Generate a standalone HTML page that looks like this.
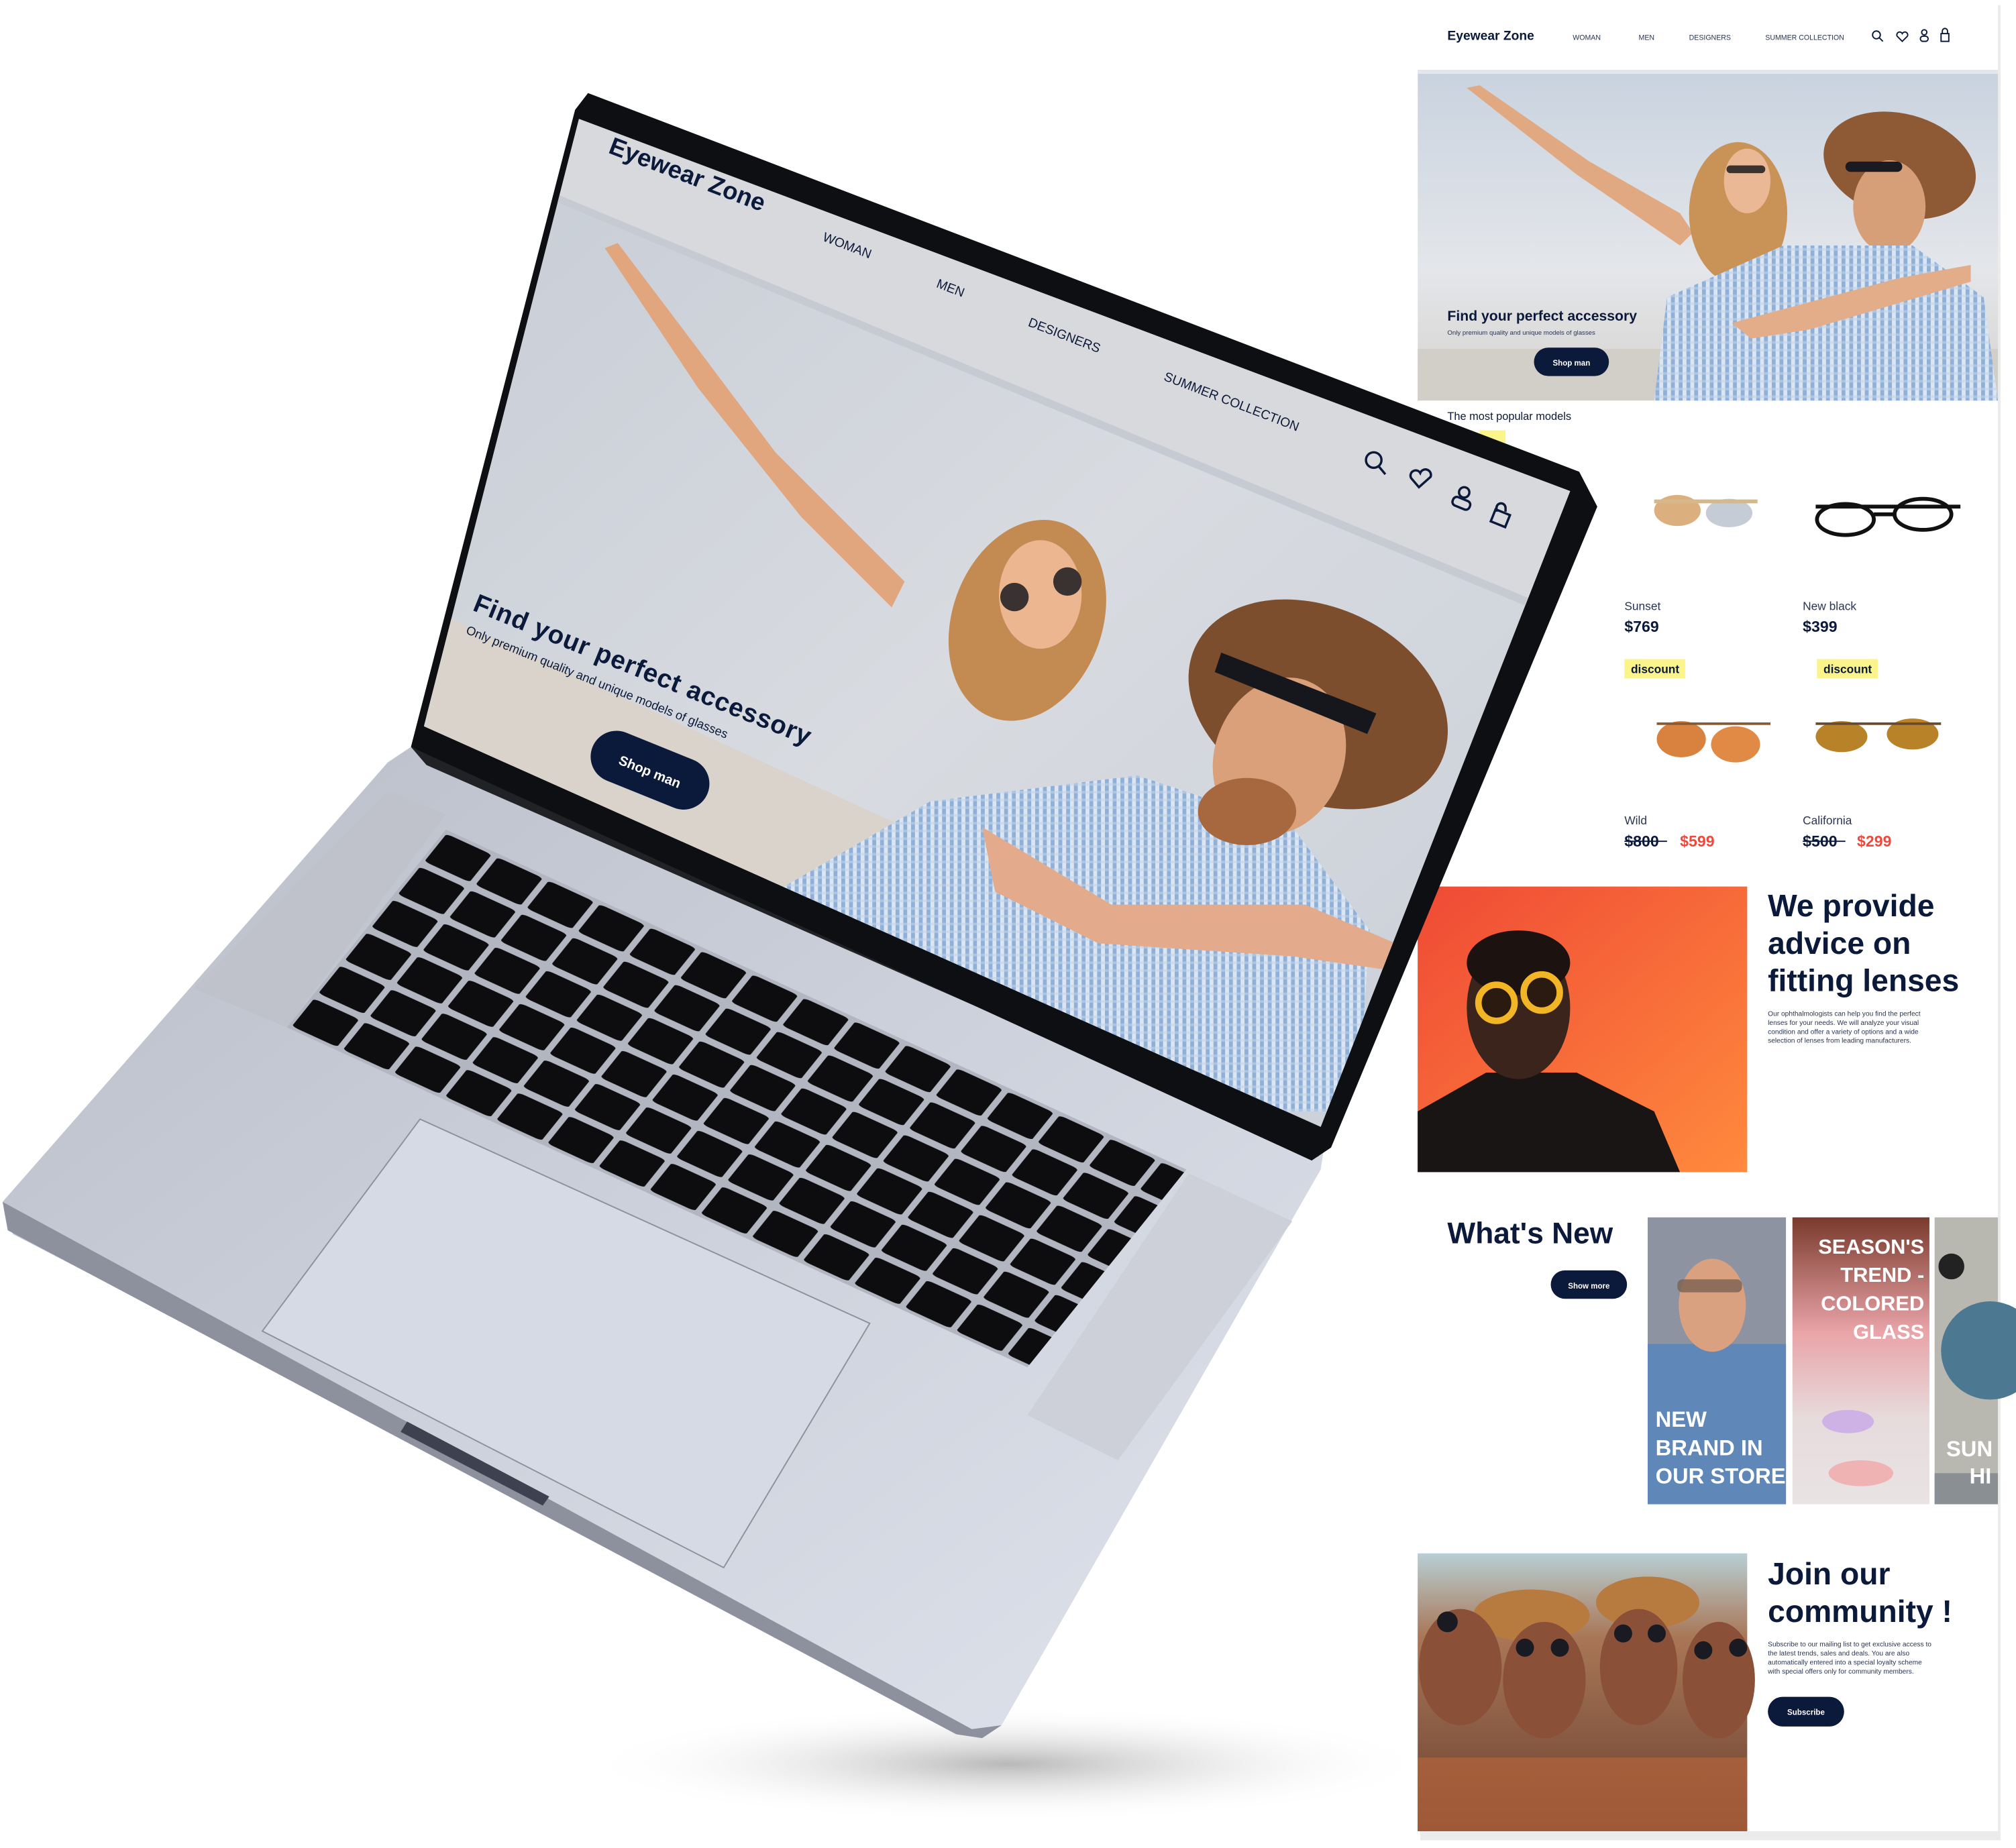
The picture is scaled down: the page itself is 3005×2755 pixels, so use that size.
<!DOCTYPE html>
<html><head><meta charset="utf-8"><style>
html,body{margin:0;padding:0;background:#fff;}
svg{display:block;}
text{font-family:"Liberation Sans",sans-serif;}
</style></head><body>
<svg width="3005" height="2755" viewBox="0 0 1560 1430" preserveAspectRatio="none" xmlns="http://www.w3.org/2000/svg">
<defs>
<linearGradient id="sky" x1="0" y1="0" x2="0" y2="1"><stop offset="0" stop-color="#c9d3df"/><stop offset="0.6" stop-color="#e4e6ea"/><stop offset="1" stop-color="#d6d3cf"/></linearGradient>
<linearGradient id="orange" x1="0" y1="0" x2="1" y2="1"><stop offset="0" stop-color="#ef4a35"/><stop offset="1" stop-color="#ff8a3d"/></linearGradient>
<linearGradient id="silver" x1="0" y1="0" x2="1" y2="1"><stop offset="0" stop-color="#b9bdc7"/><stop offset="0.5" stop-color="#cdd1db"/><stop offset="1" stop-color="#dfe3ec"/></linearGradient>
<linearGradient id="scr" x1="0" y1="0" x2="1" y2="1"><stop offset="0" stop-color="#c5cbd5"/><stop offset="0.5" stop-color="#d8dbe0"/><stop offset="1" stop-color="#c8ced8"/></linearGradient>
<radialGradient id="shadow"><stop offset="0" stop-color="#9a9a9a" stop-opacity="0.7"/><stop offset="1" stop-color="#fff" stop-opacity="0"/></radialGradient>
<linearGradient id="pink" x1="0" y1="0" x2="0" y2="1"><stop offset="0" stop-color="#7a3a2c"/><stop offset="0.4" stop-color="#e9a4a8"/><stop offset="0.7" stop-color="#e7dbdc"/><stop offset="1" stop-color="#e9e3e4"/></linearGradient>
<linearGradient id="comm" x1="0" y1="0" x2="0" y2="1"><stop offset="0" stop-color="#b8cfd4"/><stop offset="0.3" stop-color="#a97757"/><stop offset="1" stop-color="#6a4030"/></linearGradient>
<pattern id="keys" patternUnits="userSpaceOnUse" width="0.069" height="0.1667"><rect x="0.004" y="0.014" width="0.061" height="0.14" rx="0.008" fill="#0d0d0f"/></pattern>
<pattern id="check" patternUnits="userSpaceOnUse" width="6" height="6"><rect width="6" height="6" fill="#8fb0d8"/><rect width="3" height="6" fill="#dbe6f2"/><rect width="6" height="2" fill="#c3d4ea" opacity="0.6"/></pattern>
<clipPath id="dispclip"><polygon points="448,92 1215,380 1022,872 328,562"/></clipPath>
<clipPath id="herocl"><rect x="1097" y="57" width="449" height="253"/></clipPath>
</defs>

<ellipse cx="780" cy="1365" rx="330" ry="45" fill="url(#shadow)"/>

<!-- RIGHT PANEL -->
<rect x="1099" y="4" width="449" height="1420" fill="#d8d8d8" opacity="0.5"/>
<rect x="1097" y="0" width="449" height="1417" fill="#fff"/>
<text x="1120" y="31" font-size="10" font-weight="bold" fill="#0b1a3a">Eyewear Zone</text>
<text x="1217" y="31" font-size="5.5" fill="#2a3550">WOMAN</text>
<text x="1268" y="31" font-size="5.5" fill="#2a3550">MEN</text>
<text x="1307" y="31" font-size="5.5" fill="#2a3550">DESIGNERS</text>
<text x="1366" y="31" font-size="5.5" fill="#2a3550">SUMMER COLLECTION</text>
<g fill="none" stroke="#0b1a3a" stroke-width="1">
<circle cx="1452" cy="27" r="3"/><line x1="1454" y1="29" x2="1457" y2="32"/>
<path d="M1472 32 l-4 -4 a2 2 0 0 1 4 -2 a2 2 0 0 1 4 2 z"/>
<circle cx="1489" cy="25" r="2"/><rect x="1486" y="28" width="6" height="4" rx="2"/>
<rect x="1502" y="26" width="6" height="6"/><path d="M1503 26 v-2 a2 2 0 0 1 4 0 v2"/>
</g>
<rect x="1097" y="54" width="449" height="3" fill="#e3e6ec"/>
<g clip-path="url(#herocl)">
<rect x="1097" y="57" width="449" height="253" fill="url(#sky)"/>
<rect x="1097" y="270" width="449" height="40" fill="#d2cec8"/>
<path d="M1135 68 L1145 66 L1230 125 L1300 165 L1310 180 L1300 190 L1220 135 Z" fill="#e0a982"/>
<ellipse cx="1345" cy="165" rx="38" ry="55" fill="#c99358"/>
<ellipse cx="1352" cy="140" rx="18" ry="25" fill="#eab894"/>
<rect x="1336" y="128" width="30" height="6" rx="3" fill="#3a3330"/>
<ellipse cx="1470" cy="128" rx="60" ry="40" fill="#8e5a35" transform="rotate(15 1470 128)"/>
<ellipse cx="1462" cy="160" rx="28" ry="36" fill="#d79f78"/>
<rect x="1428" y="125" width="44" height="8" rx="4" fill="#1a1b22"/>
<path d="M1290 230 L1380 190 L1480 190 L1535 230 L1546 310 L1280 310 Z" fill="url(#check)"/>
<path d="M1340 250 L1470 215 L1525 205 L1525 218 L1400 255 L1355 262 Z" fill="#e4ad8a"/>
</g>
<text x="1120" y="248" font-size="11" font-weight="bold" fill="#0b1a3a">Find your perfect accessory</text>
<text x="1120" y="259" font-size="5" fill="#2a3550">Only premium quality and unique models of glasses</text>
<rect x="1187" y="269" width="58" height="22" rx="11" fill="#0b1a3a"/>
<text x="1216" y="283" font-size="6" fill="#fff" text-anchor="middle" font-weight="bold">Shop man</text>
<text x="1120" y="325" font-size="8.5" fill="#0b1a3a">The most popular models</text>
<rect x="1145" y="333" width="20" height="10" fill="#fbf48a"/>

<g>
<ellipse cx="1298" cy="395" rx="18" ry="12" fill="#d8a770" opacity="0.9"/><ellipse cx="1338" cy="397" rx="18" ry="11" fill="#c0c7d2" opacity="0.9"/><path d="M1280 388 h80" stroke="#d6b98a" stroke-width="3"/>
<g fill="none" stroke="#111" stroke-width="3"><ellipse cx="1428" cy="402" rx="22" ry="12"/><ellipse cx="1488" cy="398" rx="22" ry="12"/><path d="M1405 392 h112 M1450 398 h16"/></g>
<text x="1257" y="472" font-size="9" fill="#2a3550">Sunset</text>
<text x="1257" y="489" font-size="12" font-weight="bold" fill="#0b1a3a">$769</text>
<text x="1395" y="472" font-size="9" fill="#2a3550">New black</text>
<text x="1395" y="489" font-size="12" font-weight="bold" fill="#0b1a3a">$399</text>
<rect x="1257" y="510" width="47" height="15" fill="#fbf48a"/><text x="1262" y="521" font-size="9" font-weight="bold" fill="#0b1a3a">discount</text>
<rect x="1406" y="510" width="47" height="15" fill="#fbf48a"/><text x="1411" y="521" font-size="9" font-weight="bold" fill="#0b1a3a">discount</text>
<ellipse cx="1301" cy="572" rx="19" ry="14" fill="#d9813e"/><ellipse cx="1343" cy="576" rx="19" ry="14" fill="#e08a45"/><path d="M1282 560 h88" stroke="#8a5a30" stroke-width="2"/>
<ellipse cx="1425" cy="570" rx="20" ry="12" fill="#b88328"/><ellipse cx="1480" cy="568" rx="20" ry="12" fill="#b88328"/><path d="M1405 560 h97" stroke="#6a4a30" stroke-width="2"/>
<text x="1257" y="638" font-size="9" fill="#2a3550">Wild</text>
<text x="1257" y="655" font-size="12" font-weight="bold" fill="#0b1a3a">$800</text><line x1="1257" y1="651" x2="1290" y2="651" stroke="#0b1a3a" stroke-width="1"/>
<text x="1300" y="655" font-size="12" font-weight="bold" fill="#f0483a">$599</text>
<text x="1395" y="638" font-size="9" fill="#2a3550">California</text>
<text x="1395" y="655" font-size="12" font-weight="bold" fill="#0b1a3a">$500</text><line x1="1395" y1="651" x2="1428" y2="651" stroke="#0b1a3a" stroke-width="1"/>
<text x="1437" y="655" font-size="12" font-weight="bold" fill="#f0483a">$299</text>
</g>

<rect x="1097" y="686" width="255" height="221" fill="url(#orange)"/>
<path d="M1097 907 L1097 860 L1150 830 L1220 830 L1280 860 L1300 907 Z" fill="#1a1515"/>
<ellipse cx="1175" cy="780" rx="40" ry="55" fill="#3a241c"/>
<ellipse cx="1175" cy="745" rx="40" ry="25" fill="#1c1210"/>
<circle cx="1158" cy="776" r="14" fill="#2a1a10" stroke="#f1b525" stroke-width="5"/>
<circle cx="1193" cy="768" r="14" fill="#2a1a10" stroke="#f1b525" stroke-width="5"/>
<text x="1368" y="709" font-size="24" font-weight="bold" fill="#0b1a3a">We provide</text>
<text x="1368" y="738" font-size="24" font-weight="bold" fill="#0b1a3a">advice on</text>
<text x="1368" y="767" font-size="24" font-weight="bold" fill="#0b1a3a">fitting lenses</text>
<g font-size="5.3" fill="#2a3550">
<text x="1368" y="786">Our ophthalmologists can help you find the perfect</text>
<text x="1368" y="793">lenses for your needs. We will analyze your visual</text>
<text x="1368" y="800">condition and offer a variety of options and a wide</text>
<text x="1368" y="807">selection of lenses from leading manufacturers.</text>
</g>

<text x="1120" y="962" font-size="23" font-weight="bold" fill="#0b1a3a">What's New</text>
<rect x="1200" y="983" width="59" height="22" rx="11" fill="#0b1a3a"/>
<text x="1229.5" y="997" font-size="6" fill="#fff" text-anchor="middle" font-weight="bold">Show more</text>
<rect x="1275" y="942" width="107" height="222" fill="#8d93a0"/>
<rect x="1275" y="1040" width="107" height="124" fill="#5f87b8"/>
<ellipse cx="1325" cy="1010" rx="26" ry="36" fill="#d9a17f"/>
<rect x="1298" y="990" width="50" height="10" rx="4" fill="#7a6152" opacity="0.8"/>
<g font-size="17" font-weight="bold" fill="#fff"><text x="1281" y="1104">NEW</text><text x="1281" y="1126">BRAND IN</text><text x="1281" y="1148">OUR STORE</text></g>
<rect x="1387" y="942" width="106" height="222" fill="url(#pink)"/>
<g font-size="16" font-weight="bold" fill="#fff" text-anchor="end"><text x="1489" y="970">SEASON'S</text><text x="1489" y="992">TREND -</text><text x="1489" y="1014">COLORED</text><text x="1489" y="1036">GLASS</text></g>
<ellipse cx="1430" cy="1100" rx="20" ry="9" fill="#c8a8e8" opacity="0.8"/><ellipse cx="1440" cy="1140" rx="25" ry="10" fill="#f0a8a8" opacity="0.8"/>
<rect x="1497" y="942" width="49" height="222" fill="#b8b8b0"/>
<circle cx="1540" cy="1045" r="38" fill="#4d7891"/>
<circle cx="1510" cy="980" r="10" fill="#222"/>
<rect x="1497" y="1140" width="49" height="24" fill="#8a8f94"/>
<g font-size="17" font-weight="bold" fill="#fff"><text x="1506" y="1127">SUN</text><text x="1524" y="1148">HI</text></g>

<rect x="1097" y="1202" width="255" height="215" fill="url(#comm)"/>
<g fill="#b77a3f"><ellipse cx="1185" cy="1250" rx="45" ry="20"/><ellipse cx="1275" cy="1240" rx="40" ry="20"/></g>
<g fill="#8a5038"><ellipse cx="1130" cy="1290" rx="32" ry="45"/><ellipse cx="1195" cy="1300" rx="32" ry="45"/><ellipse cx="1268" cy="1290" rx="30" ry="45"/><ellipse cx="1330" cy="1300" rx="28" ry="45"/></g>
<g fill="#1a1a22"><circle cx="1120" cy="1255" r="8"/><circle cx="1180" cy="1275" r="7"/><circle cx="1207" cy="1275" r="7"/><circle cx="1256" cy="1264" r="7"/><circle cx="1282" cy="1264" r="7"/><circle cx="1318" cy="1277" r="7"/><circle cx="1345" cy="1275" r="7"/></g>
<rect x="1097" y="1360" width="255" height="57" fill="#b5643a" opacity="0.7"/>
<text x="1368" y="1226" font-size="24" font-weight="bold" fill="#0b1a3a">Join our</text>
<text x="1368" y="1255" font-size="24" font-weight="bold" fill="#0b1a3a">community !</text>
<g font-size="5.3" fill="#2a3550">
<text x="1368" y="1274">Subscribe to our mailing list to get exclusive access to</text>
<text x="1368" y="1281">the latest trends, sales and deals. You are also</text>
<text x="1368" y="1288">automatically entered into a special loyalty scheme</text>
<text x="1368" y="1295">with special offers only for community members.</text>
</g>
<rect x="1368" y="1313" width="59" height="23" rx="11.5" fill="#0b1a3a"/>
<text x="1397.5" y="1327" font-size="6" fill="#fff" text-anchor="middle" font-weight="bold">Subscribe</text>

<!-- LAPTOP BASE -->
<polygon points="318,578 1025,885 1022,905 775,1335 752,1338 10,955 2,930 300,590" fill="url(#silver)"/>
<polygon points="2,930 752,1338 775,1335 760,1345 740,1342 6,952" fill="#8d919d"/>
<polygon points="315,1100 425,1158 420,1165 310,1108" fill="#3d4150"/>
<polygon points="300,612 345,630 222,795 150,765" fill="#bfc2ca"/>
<polygon points="920,908 1000,945 865,1130 795,1095" fill="#cdd0d8"/>
<g transform="matrix(573,263,-123,153,345,642)">
<polygon points="0,0 1,0 1,1 0,1" fill="#b2b6c0"/>
<polygon points="0,0 1,0 1,1 0,1" fill="url(#keys)"/>
</g>
<polygon points="325,866 673,1024 560,1213 203,1030" fill="#d6dae4" stroke="#8d919c" stroke-width="1"/>
<polygon points="318,578 1025,885 1020,895 330,592" fill="#202226"/>

<!-- LAPTOP SCREEN -->
<polygon points="455,72 1222,365 1236,392 1030,888 1015,898 318,578 445,85" fill="#0e0f12"/>
<g clip-path="url(#dispclip)">
<rect x="300" y="60" width="950" height="850" fill="url(#scr)"/>
<polygon points="330,470 700,640 600,700 330,580" fill="#d9d3cc"/>
<path d="M468 192 L478 188 L540 270 L600 350 L660 410 L700 450 L690 470 L620 400 L540 300 Z" fill="#e1a67d"/>
<ellipse cx="795" cy="480" rx="58" ry="80" fill="#c38a52" transform="rotate(20 795 480)"/>
<ellipse cx="805" cy="460" rx="32" ry="42" fill="#ecb690"/>
<circle cx="785" cy="462" r="11" fill="#3a3230"/><circle cx="826" cy="450" r="11" fill="#3a3230"/>
<path d="M600 690 L720 620 L880 600 L1000 640 L1060 720 L1050 860 L880 860 L700 780 Z" fill="url(#check)"/>
<ellipse cx="1020" cy="545" rx="105" ry="75" fill="#7d4e2e" transform="rotate(25 1020 545)"/>
<ellipse cx="990" cy="585" rx="50" ry="62" fill="#d9a07a" transform="rotate(20 990 585)"/>
<path d="M945 505 L1065 552 L1058 568 L940 520 Z" fill="#16171c"/>
<ellipse cx="965" cy="628" rx="38" ry="26" fill="#a8683f"/>
<path d="M760 640 L860 700 L1010 700 L1080 730 L1070 750 L1000 740 L850 730 L770 690 Z" fill="#e3ab8b"/>
<polygon points="430,60 1240,360 1200,470 430,150" fill="#d8d9dc"/>
<polygon points="430,150 1200,470 1198,476 430,156" fill="#c6cad2"/>
</g>
<g fill="#0b1a3a">
<text transform="translate(470,118) rotate(21)" font-size="19" font-weight="bold">Eyewear Zone</text>
<text transform="translate(636,186) rotate(21)" font-size="10">WOMAN</text>
<text transform="translate(724,222) rotate(21)" font-size="10">MEN</text>
<text transform="translate(795,252) rotate(21)" font-size="10">DESIGNERS</text>
<text transform="translate(900,294) rotate(21)" font-size="10">SUMMER COLLECTION</text>
<text transform="translate(365,472) rotate(22)" font-size="20" font-weight="bold" letter-spacing="0.5">Find your perfect accessory</text>
<text transform="translate(360,490) rotate(22)" font-size="9.5">Only premium quality and unique models of glasses</text>
</g>
<g fill="none" stroke="#0b1a3a" stroke-width="1.8">
<circle cx="1063" cy="356" r="6"/><line x1="1067" y1="361" x2="1072" y2="367"/>
<path d="M1098 377 l-6 -7 a4 4 0 0 1 7 -4 a4 4 0 0 1 8 3 z"/>
<circle cx="1133" cy="381" r="4"/><rect x="1124" y="386" width="14" height="7" rx="3" transform="rotate(22 1131 389)"/>
<rect x="1155" y="396" width="12" height="10" transform="rotate(22 1161 401)"/><path d="M1158 396 v-3 a3 3 0 0 1 7 0 v3"/>
</g>
<rect x="455" y="576" width="96" height="40" rx="20" fill="#0b1a3a" transform="rotate(22 503 596)"/>
<text transform="translate(478,591) rotate(22)" font-size="10.5" fill="#fff" font-weight="bold">Shop man</text>
</svg>
</body></html>
